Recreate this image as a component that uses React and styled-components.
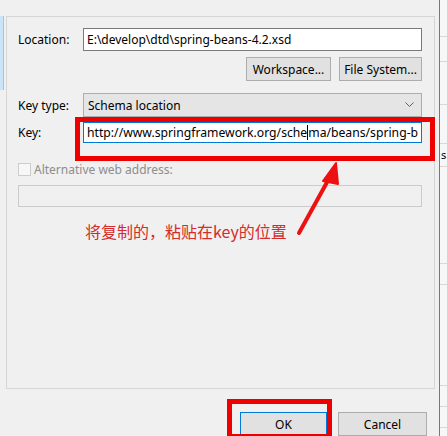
import React from "react";
import styled, { createGlobalStyle } from "styled-components";

const GlobalStyle = createGlobalStyle`
  html, body {
    margin: 0;
    padding: 0;
    background: #f0f0f0;
  }
  body {
    font-family: "Noto Sans", "Noto Sans CJK SC", sans-serif;
    font-size: 12px;
    color: #000;
  }
`;

const Page = styled.div`
  width: 447px;
  height: 436px;
  overflow: hidden;
  display: flex;
  background: #f0f0f0;
`;

const SideStrip = styled.div`
  width: 6px;
  display: flex;
  flex-direction: column;
  padding-top: 16px;
  .sel {
    width: 3px;
    height: 74px;
    background: #cce4f7;
    border-right: 1px solid #99c9ef;
  }
`;

const Main = styled.div`
  width: 429px;
  display: flex;
  flex-direction: column;
  padding-top: 16px;
`;

const GroupBox = styled.div`
  position: relative;
  height: 373px;
  box-sizing: border-box;
  border: 1px solid #d6d6d6;
  padding: 11px 12px 0 11px;
  display: flex;
  flex-direction: column;
`;

const Row = styled.div`
  display: flex;
  align-items: center;
  margin-top: ${(p) => p.top || 0}px;
  justify-content: ${(p) => (p.right ? "flex-end" : "flex-start")};
  gap: ${(p) => p.gap || 0}px;
`;

const Label = styled.div`
  width: 65px;
  flex: none;
  color: ${(p) => (p.disabled ? "#8d8d8d" : "#000")};
`;

const TextBox = styled.div`
  flex: 1;
  box-sizing: border-box;
  border: 1px solid ${(p) => (p.focused ? "#0078d7" : p.disabled ? "#cccccc" : "#7a7a7a")};
  background: ${(p) => (p.disabled ? "#f0f0f0" : "#fff")};
  padding: 0 3px;
  display: flex;
  align-items: center;
  white-space: nowrap;
  overflow: hidden;
  height: ${(p) => p.h || 23}px;
  font-size: ${(p) => p.fs || 12}px;
`;

const Caret = styled.span`
  display: inline-block;
  width: 1px;
  height: 15px;
  background: #000;
  flex: none;
`;

const Button = styled.div`
  width: ${(p) => p.w}px;
  height: 24px;
  box-sizing: border-box;
  border: 1px solid ${(p) => (p.primary ? "#0078d7" : "#adadad")};
  background: #e1e1e1;
  display: flex;
  align-items: center;
  justify-content: center;
  flex: none;
`;

const Combo = styled.div`
  flex: 1;
  height: 24px;
  box-sizing: border-box;
  border: 1px solid #adadad;
  background: #e5e5e5;
  display: flex;
  align-items: center;
  justify-content: space-between;
  padding: 0 7px 0 4px;
`;

const Check = styled.div`
  width: 13px;
  height: 13px;
  box-sizing: border-box;
  border: 1px solid #cccccc;
  background: #f7f7f7;
  margin-right: 3px;
`;

const Note = styled.div`
  margin: 14px 0 0 67px;
  color: #d42c2c;
  font-family: "Noto Sans CJK SC", sans-serif;
  font-size: 16px;
  line-height: 20px;
`;

const Highlight = styled.div`
  position: absolute;
  box-sizing: border-box;
  border: 5px solid #ee0000;
  left: ${(p) => p.x}px;
  top: ${(p) => p.y}px;
  width: ${(p) => p.w}px;
  height: ${(p) => p.h}px;
`;

const Arrow = styled.svg`
  position: absolute;
  left: 0;
  top: 0;
  pointer-events: none;
`;

const Footer = styled.div`
  position: relative;
  display: flex;
  justify-content: flex-end;
  gap: 11px;
  padding: 23px 8px 0 0;
`;

const RightPane = styled.div`
  flex: 1;
  display: flex;
  margin-left: 1px;
  .gap {
    width: 3px;
  }
  .pane {
    flex: 1;
    border-left: 1px solid #2f8bd6;
    background: #f7f7f7;
    display: flex;
    flex-direction: column;
  }
`;

const PaneLine = styled.div`
  height: ${(p) => p.h}px;
  border-bottom: 1px solid #d8d8d8;
  font-size: 11px;
  line-height: ${(p) => p.h}px;
  overflow: hidden;
  padding-left: 1px;
`;

export default function App() {
  return (
    <>
      <GlobalStyle />
      <Page>
        <SideStrip>
          <div className="sel" />
        </SideStrip>
        <Main>
          <GroupBox>
            <Row>
              <Label>Location:</Label>
              <TextBox>E:\develop\dtd\spring-beans-4.2.xsd</TextBox>
            </Row>
            <Row right gap={8} top={6}>
              <Button w={85}>Workspace...</Button>
              <Button w={83}>File System...</Button>
            </Row>
            <Row top={12}>
              <Label>Key type:</Label>
              <Combo>
                <span>Schema location</span>
                <svg width="9" height="6" viewBox="0 0 9 6">
                  <path d="M0.5 0.5 L4.5 4.5 L8.5 0.5" fill="none" stroke="#606060" strokeWidth="1" />
                </svg>
              </Combo>
            </Row>
            <Row top={5}>
              <Label>Key:</Label>
              <TextBox focused h={21} fs={12.2}>
                http://www.springframework.org/sche
                <Caret />
                ma/beans/spring-b
              </TextBox>
            </Row>
            <Row top={18}>
              <Check />
              <Label disabled style={{ width: "auto" }}>
                Alternative web address:
              </Label>
            </Row>
            <Row top={7}>
              <TextBox disabled h={22} />
            </Row>
            <Note>将复制的，粘贴在key的位置</Note>
            <Highlight x={68} y={100} w={360} h={44} />
            <Arrow width="429" height="260">
              <line x1="292" y1="216" x2="324" y2="158" stroke="#ee1111" strokeWidth="4" strokeLinecap="round" />
              <polygon points="329,146 316,164 331,167" fill="#ee1111" stroke="#ee1111" strokeWidth="2" strokeLinejoin="round" />
            </Arrow>
          </GroupBox>
          <Footer>
            <Button primary w={87}>OK</Button>
            <Button w={89}>Cancel</Button>
            <Highlight x={221} y={10} w={105} h={40} />
          </Footer>
        </Main>
        <RightPane>
          <div className="gap" />
          <div className="pane">
            <PaneLine h={36} />
            <PaneLine h={24} />
            <PaneLine h={42} />
            <PaneLine h={38} />
            <PaneLine h={22}>s</PaneLine>
            <PaneLine h={96} />
            <PaneLine h={20} />
            <PaneLine h={100} />
            <PaneLine h={20} />
            <PaneLine h={20} />
          </div>
        </RightPane>
      </Page>
    </>
  );
}
